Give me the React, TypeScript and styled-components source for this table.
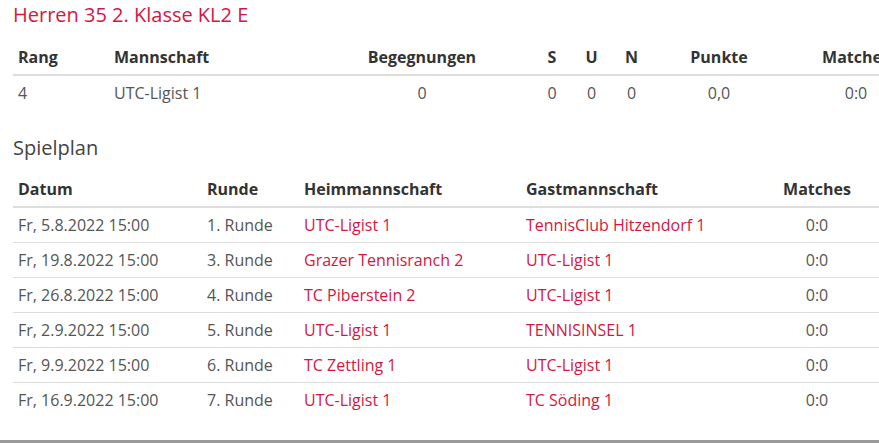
import React from "react";
import styled, { createGlobalStyle } from "styled-components";

const GlobalStyle = createGlobalStyle`
  html, body {
    margin: 0;
    padding: 0;
    background: #ffffff;
    overflow: hidden;
  }
  body {
    font-family: "Open Sans", "Liberation Sans", Arial, sans-serif;
    font-size: 16px;
    color: #555;
  }
`;

const Page = styled.div`
  width: 879px;
  height: 443px;
  display: flex;
  flex-direction: column;
  overflow: hidden;
`;

const Content = styled.div`
  padding-left: 13px;
  flex: 1;
  display: flex;
  flex-direction: column;
`;

const Heading = styled.h3<{ $accent?: boolean }>`
  margin: ${(p) => (p.$accent ? "4px 0 14px" : "27px 0 13px")};
  font-size: 20px;
  line-height: 22px;
  font-weight: 400;
  color: ${(p) => (p.$accent ? "#d4173f" : "#444")};
`;

const Table = styled.table<{ $width: number }>`
  width: ${(p) => p.$width}px;
  border-collapse: collapse;
  table-layout: fixed;
  flex: none;
`;

const Th = styled.th<{ $align?: string }>`
  padding: 7px 5px;
  line-height: 20px;
  font-size: 16px;
  font-weight: 700;
  color: #333;
  text-align: ${(p) => p.$align || "left"};
  border-bottom: 2px solid #ddd;
  white-space: nowrap;
  overflow: hidden;
`;

const Td = styled.td<{ $align?: string; $link?: boolean }>`
  padding: 7px 5px;
  line-height: 20px;
  font-size: 16px;
  color: ${(p) => (p.$link ? "#d4173f" : "#555")};
  text-align: ${(p) => p.$align || "left"};
  border-top: 1px solid #ddd;
  white-space: nowrap;
`;

const Footer = styled.div`
  margin-top: auto;
  height: 3px;
  background: #9a9a9a;
  flex: none;
`;

const standingsCols: { label: string; width: number; align: string }[] = [
  { label: "Rang", width: 96, align: "left" },
  { label: "Mannschaft", width: 203, align: "left" },
  { label: "Begegnungen", width: 220, align: "center" },
  { label: "S", width: 40, align: "center" },
  { label: "U", width: 39, align: "center" },
  { label: "N", width: 41, align: "center" },
  { label: "Punkte", width: 134, align: "center" },
  { label: "Matches", width: 140, align: "center" },
];

const standingsRow = ["4", "UTC-Ligist 1", "0", "0", "0", "0", "0,0", "0:0"];

const scheduleCols: { label: string; width: number; align: string }[] = [
  { label: "Datum", width: 189, align: "left" },
  { label: "Runde", width: 97, align: "left" },
  { label: "Heimmannschaft", width: 222, align: "left" },
  { label: "Gastmannschaft", width: 234, align: "left" },
  { label: "Matches", width: 124, align: "center" },
];

const schedule = [
  ["Fr, 5.8.2022 15:00", "1. Runde", "UTC-Ligist 1", "TennisClub Hitzendorf 1", "0:0"],
  ["Fr, 19.8.2022 15:00", "3. Runde", "Grazer Tennisranch 2", "UTC-Ligist 1", "0:0"],
  ["Fr, 26.8.2022 15:00", "4. Runde", "TC Piberstein 2", "UTC-Ligist 1", "0:0"],
  ["Fr, 2.9.2022 15:00", "5. Runde", "UTC-Ligist 1", "TENNISINSEL 1", "0:0"],
  ["Fr, 9.9.2022 15:00", "6. Runde", "TC Zettling 1", "UTC-Ligist 1", "0:0"],
  ["Fr, 16.9.2022 15:00", "7. Runde", "UTC-Ligist 1", "TC Söding 1", "0:0"],
];

export default function App() {
  const sum = (cols: { width: number }[]) => cols.reduce((a, c) => a + c.width, 0);
  return (
    <Page>
      <GlobalStyle />
      <Content>
        <Heading $accent>Herren 35 2. Klasse KL2 E</Heading>
        <Table $width={sum(standingsCols)}>
          <colgroup>
            {standingsCols.map((c) => (
              <col key={c.label} style={{ width: c.width }} />
            ))}
          </colgroup>
          <thead>
            <tr>
              {standingsCols.map((c) => (
                <Th key={c.label} $align={c.align}>
                  {c.label}
                </Th>
              ))}
            </tr>
          </thead>
          <tbody>
            <tr>
              {standingsRow.map((v, i) => (
                <Td key={i} $align={standingsCols[i].align}>
                  {v}
                </Td>
              ))}
            </tr>
          </tbody>
        </Table>
        <Heading>Spielplan</Heading>
        <Table $width={sum(scheduleCols)}>
          <colgroup>
            {scheduleCols.map((c) => (
              <col key={c.label} style={{ width: c.width }} />
            ))}
          </colgroup>
          <thead>
            <tr>
              {scheduleCols.map((c) => (
                <Th key={c.label} $align={c.align}>
                  {c.label}
                </Th>
              ))}
            </tr>
          </thead>
          <tbody>
            {schedule.map((row, r) => (
              <tr key={r}>
                {row.map((v, i) => (
                  <Td key={i} $align={scheduleCols[i].align} $link={i === 2 || i === 3}>
                    {v}
                  </Td>
                ))}
              </tr>
            ))}
          </tbody>
        </Table>
      </Content>
      <Footer />
    </Page>
  );
}
